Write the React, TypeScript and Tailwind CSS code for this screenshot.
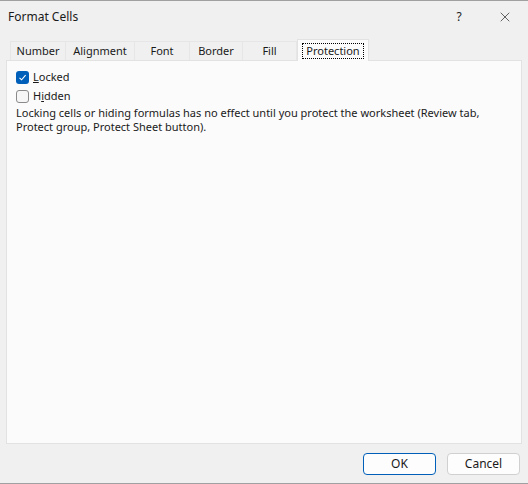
import { X } from "lucide-react";

const TABS = ["Number", "Alignment", "Font", "Border", "Fill", "Protection"];
const TAB_W = [56, 69, 55, 53, 54, 72];

function Check({ checked }: { checked: boolean }) {
  return checked ? (
    <span className="flex h-[13px] w-[13px] items-center justify-center rounded-[3px] bg-[#005fb8]">
      <svg width="9" height="9" viewBox="0 0 9 9" fill="none">
        <path d="M1.5 4.8 L3.6 6.8 L7.6 2.2" stroke="white" strokeWidth="1.1" />
      </svg>
    </span>
  ) : (
    <span className="h-[13px] w-[13px] rounded-[3px] border border-[#8a8a8a] bg-[#f6f6f6]" />
  );
}

export default function App() {
  return (
    <div
      className="flex h-[484px] w-[528px] flex-col border-t border-b border-[#a0a0a0] bg-[#f0f0f0] text-[11px] text-[#1a1a1a]"
      style={{ fontFamily: '"Segoe UI", "Noto Sans", sans-serif' }}
    >
      {/* title bar */}
      <div className="flex h-[31px] items-center pl-2 text-[12px]">
        <span className="flex-1">Format Cells</span>
        <span className="w-[46px] text-center">?</span>
        <span className="flex w-[46px] justify-center">
          <X size={16} strokeWidth={1} />
        </span>
      </div>

      {/* tab strip */}
      <div className="mt-[8px] flex h-[20px] items-end pl-[10px]">
        {TABS.map((t, i) => {
          const active = t === "Protection";
          return (
            <div
              key={t}
              style={{ width: TAB_W[i] }}
              className={
                active
                  ? "relative z-10 -mb-px flex h-[22px] items-center justify-center border border-b-0 border-[#e2e2e2] bg-[#fbfbfb]"
                  : "flex h-[19px] items-center justify-center border-t border-r border-[#e6e6e6] bg-[#f0f0f0] first:border-l"
              }
            >
              <span className={active ? "border border-dotted border-black px-[3px] leading-[14px]" : "leading-[14px]"}>
                {t}
              </span>
            </div>
          );
        })}
      </div>

      {/* protection panel */}
      <div className="mx-[6px] h-[384px] border border-[#e2e2e2] bg-[#fbfbfb] px-[9px] pt-[7px]">
        <label className="flex h-[19px] items-center gap-[4px]">
          <Check checked />
          <span>
            <u>L</u>ocked
          </span>
        </label>
        <label className="flex h-[19px] items-center gap-[4px]">
          <Check checked={false} />
          <span>
            H<u>i</u>dden
          </span>
        </label>
        <p className="leading-[14px]">
          Locking cells or hiding formulas has no effect until you protect the worksheet (Review tab,
          <br />
          Protect group, Protect Sheet button).
        </p>
      </div>

      {/* footer buttons */}
      <div className="mt-[9px] flex justify-end gap-[11px] pr-[8px] text-[12px]">
        <button className="h-[22px] w-[73px] rounded-[4px] border border-[#005fb8] bg-[#fdfdfd]">OK</button>
        <button className="h-[22px] w-[73px] rounded-[4px] border border-[#d0d0d0] bg-[#fdfdfd]">Cancel</button>
      </div>
    </div>
  );
}
